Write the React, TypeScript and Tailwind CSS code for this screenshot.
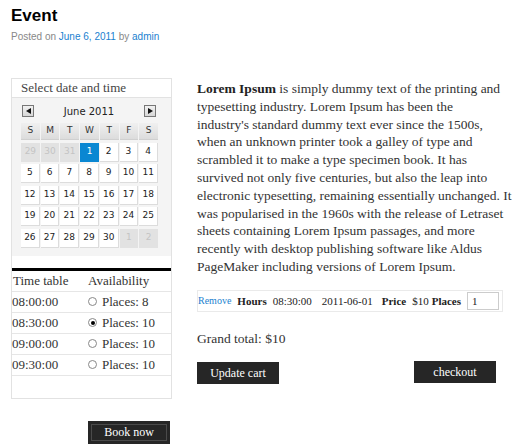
import React from 'react';

const serif = { fontFamily: '"Liberation Serif", "Times New Roman", serif' };

const weeks: { d: number; off?: boolean; sel?: boolean }[][] = [
  [{ d: 29, off: true }, { d: 30, off: true }, { d: 31, off: true }, { d: 1, sel: true }, { d: 2 }, { d: 3 }, { d: 4 }],
  [{ d: 5 }, { d: 6 }, { d: 7 }, { d: 8 }, { d: 9 }, { d: 10 }, { d: 11 }],
  [{ d: 12 }, { d: 13 }, { d: 14 }, { d: 15 }, { d: 16 }, { d: 17 }, { d: 18 }],
  [{ d: 19 }, { d: 20 }, { d: 21 }, { d: 22 }, { d: 23 }, { d: 24 }, { d: 25 }],
  [{ d: 26 }, { d: 27 }, { d: 28 }, { d: 29 }, { d: 30 }, { d: 1, off: true }, { d: 2, off: true }],
];

const slots = [
  { time: '08:00:00', places: 8, checked: false },
  { time: '08:30:00', places: 10, checked: true },
  { time: '09:00:00', places: 10, checked: false },
  { time: '09:30:00', places: 10, checked: false },
];

// line breaks follow the original column
const lines = [
  'typesetting industry. Lorem Ipsum has been the',
  "industry's standard dummy text ever since the 1500s,",
  'when an unknown printer took a galley of type and',
  'scrambled it to make a type specimen book. It has',
  'survived not only five centuries, but also the leap into',
  'electronic typesetting, remaining essentially unchanged. It',
  'was popularised in the 1960s with the release of Letraset',
  'sheets containing Lorem Ipsum passages, and more',
  'recently with desktop publishing software like Aldus',
  'PageMaker including versions of Lorem Ipsum.',
];

function Radio({ checked }: { checked: boolean }) {
  return (
    <span className="inline-flex h-[9px] w-[9px] items-center justify-center rounded-full border border-[#888] bg-white">
      {checked && <span className="h-[4px] w-[4px] rounded-full bg-black" />}
    </span>
  );
}

function NavButton({ dir }: { dir: 'prev' | 'next' }) {
  return (
    <span className="flex h-[12px] w-[12px] items-center justify-center border border-[#777] bg-gradient-to-b from-[#f2f2f2] to-[#d6d6d6]">
      <svg width="5" height="6" viewBox="0 0 5 6">
        {dir === 'prev' ? <path d="M5 0 L0 3 L5 6 Z" fill="#111" /> : <path d="M0 0 L5 3 L0 6 Z" fill="#111" />}
      </svg>
    </span>
  );
}

function Calendar() {
  return (
    <div className="bg-[#f4f4f4] px-[9px] pt-[6px] pb-[8px]">
      <div className="flex h-[14px] items-center justify-between pl-[1px] pr-[6px]">
        <NavButton dir="prev" />
        <span className="text-[10px] text-[#222]" style={{ fontFamily: '"DejaVu Sans", sans-serif' }}>June 2011</span>
        <NavButton dir="next" />
      </div>
      <div className="mt-[5px] grid w-[137px] grid-cols-7 gap-x-[1px] gap-y-[2.5px]" style={{ fontFamily: '"DejaVu Sans", sans-serif' }}>
        {['S', 'M', 'T', 'W', 'T', 'F', 'S'].map((d, i) => (
          <div key={i} className="flex h-[17px] items-center justify-center border-b border-[#d0d0d0] bg-gradient-to-b from-[#f0f0f0] to-[#dcdcdc] text-[9px] text-[#333]">
            {d}
          </div>
        ))}
        {weeks.flat().map((c, i) => (
          <div
            key={i}
            className={
              'flex h-[19px] items-center justify-center text-[9px] ' +
              (c.sel
                ? 'bg-[#0a87d2] text-white'
                : c.off
                ? 'bg-[#e2e2e2] text-[#c4c4c4]'
                : 'border-b border-r border-[#dcdcdc] bg-white text-[#222]')
            }
          >
            {c.d}
          </div>
        ))}
      </div>
    </div>
  );
}

export default function App() {
  return (
    <div className="h-[446px] w-[530px] bg-white pl-[11px] text-[#333]">
      <h1 className="pt-[6px] text-[17px] font-bold leading-[20px] text-black" style={{ fontFamily: '"Liberation Sans", Arial, sans-serif' }}>
        Event
      </h1>
      <p className="mt-[5px] text-[10px] leading-[12px] text-[#888]" style={{ fontFamily: '"Liberation Sans", Arial, sans-serif' }}>
        Posted on <span className="text-[#1b7fcf]">June 6, 2011</span> by <span className="text-[#1b7fcf]">admin</span>
      </p>

      <div className="mt-[35px] flex">
        <div className="w-[161px]">
          <div className="border border-[#e2e2e2]">
            <div className="h-[19px] border-b border-[#e2e2e2] pl-[9px] text-[13px] leading-[18px] text-[#444]" style={serif}>
              Select date and time
            </div>
            <Calendar />
            <div className="h-[12px] bg-white" />
            <div className="border-t-[3px] border-black" style={serif}>
              <div className="flex h-[21px] items-center border-b border-[#e6e6e6] text-[13px] text-[#333]">
                <span className="w-[76px] pl-[1px]">Time table</span>
                <span>Availability</span>
              </div>
              {slots.map((s) => (
                <div key={s.time} className="flex h-[21px] items-center border-b border-[#e6e6e6] text-[13px] text-[#333]">
                  <span className="w-[76px]">{s.time}</span>
                  <span className="flex items-center gap-[5px]">
                    <Radio checked={s.checked} />
                    Places: {s.places}
                  </span>
                </div>
              ))}
              <div className="h-[22px]" />
            </div>
          </div>
          <div className="mt-[22px] flex justify-end pr-[2px]">
            <button className="h-[23px] w-[82px] bg-[#262626] p-[3px]" style={serif}>
              <span className="flex h-full w-full items-center justify-center border border-[#4a4a4a] text-[12px] text-white">Book now</span>
            </button>
          </div>
        </div>

        <div className="ml-[25px] w-[312px]" style={serif}>
          <p className="whitespace-nowrap pt-[2px] text-[13.5px] leading-[17.8px] text-[#333]">
            <b className="text-[#222]">Lorem Ipsum</b> is simply dummy text of the printing and
            {lines.map((l) => (
              <React.Fragment key={l}>
                <br />
                {l}
              </React.Fragment>
            ))}
          </p>

          <div className="mt-[14px] flex h-[22px] w-[306px] items-center gap-[6px] whitespace-nowrap border border-[#eaeaea] text-[11px] text-[#222]">
            <span className="text-[10px] text-[#1b7fcf]">Remove</span>
            <b>Hours</b>
            <span>08:30:00</span>
            <span className="ml-[4px]">2011-06-01</span>
            <b className="ml-[3px]">Price</b>
            <span>$10</span>
            <b className="-ml-[3px]">Places</b>
            <span className="flex h-[18px] w-[32px] items-center border border-[#ccc] pl-[4px]">1</span>
          </div>

          <p className="mt-[19px] text-[13.5px] leading-[16px] text-[#333]">Grand total: $10</p>

          <div className="mt-[14px] flex w-[299px] justify-between">
            <button className="mt-[1px] h-[22px] w-[82px] bg-[#262626] text-[12px] text-white">Update cart</button>
            <button className="h-[22px] w-[82px] bg-[#262626] text-[12px] text-white">checkout</button>
          </div>
        </div>
      </div>
    </div>
  );
}
